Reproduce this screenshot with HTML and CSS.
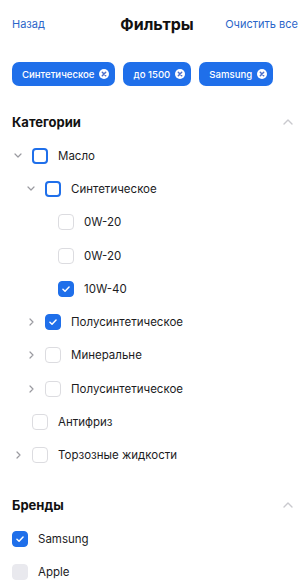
FILE: index.html
```html
<!DOCTYPE html>
<html lang="ru">
<head>
  <meta charset="UTF-8" />
  <meta name="viewport" content="width=device-width, initial-scale=1.0"/>
  <title>Фильтры</title>
<link rel="stylesheet" href="styles.css">
</head>
<body>
<div class="header">
  <a class="link" href="#">Назад</a>
  <div class="title">Фильтры</div>
  <a class="link right-link" href="#">Очистить все</a>
</div>

<div class="chips">
  <div class="chip">Синтетическое <span class="chip-x"><svg viewBox="0 0 10 10"><path d="M3.3 3.3l3.4 3.4M6.7 3.3l-3.4 3.4"/></svg></span></div>
  <div class="chip">до 1500 <span class="chip-x"><svg viewBox="0 0 10 10"><path d="M3.3 3.3l3.4 3.4M6.7 3.3l-3.4 3.4"/></svg></span></div>
  <div class="chip">Samsung <span class="chip-x"><svg viewBox="0 0 10 10"><path d="M3.3 3.3l3.4 3.4M6.7 3.3l-3.4 3.4"/></svg></span></div>
</div>

<div class="section">
  <div class="section-head">
    <span>Категории</span>
    <svg class="up" viewBox="0 0 10 6"><path d="M1 5l4-4 4 4"/></svg>
  </div>
  <div class="tree">
    <div class="row lvl0">
      <span class="arrow"><svg viewBox="0 0 8 5"><path d="M1 1l3 3 3-3"/></svg></span>
      <span class="box partial"></span>
      <span class="label">Масло</span>
    </div>
    <div class="row lvl1">
      <span class="arrow"><svg viewBox="0 0 8 5"><path d="M1 1l3 3 3-3"/></svg></span>
      <span class="box partial"></span>
      <span class="label">Синтетическое</span>
    </div>
    <div class="row lvl2">
      <span class="arrow"></span>
      <span class="box"></span>
      <span class="label">0W-20</span>
    </div>
    <div class="row lvl2">
      <span class="arrow"></span>
      <span class="box"></span>
      <span class="label">0W-20</span>
    </div>
    <div class="row lvl2">
      <span class="arrow"></span>
      <span class="box checked"><svg viewBox="0 0 16 16"><path d="M4.5 8.2l2.4 2.3 4.6-4.8"/></svg></span>
      <span class="label">10W-40</span>
    </div>
    <div class="row lvl1">
      <span class="arrow"><svg class="right" viewBox="0 0 5 8"><path d="M1 1l3 3-3 3"/></svg></span>
      <span class="box checked"><svg viewBox="0 0 16 16"><path d="M4.5 8.2l2.4 2.3 4.6-4.8"/></svg></span>
      <span class="label">Полусинтетическое</span>
    </div>
    <div class="row lvl1">
      <span class="arrow"><svg class="right" viewBox="0 0 5 8"><path d="M1 1l3 3-3 3"/></svg></span>
      <span class="box"></span>
      <span class="label">Минеральне</span>
    </div>
    <div class="row lvl1">
      <span class="arrow"><svg class="right" viewBox="0 0 5 8"><path d="M1 1l3 3-3 3"/></svg></span>
      <span class="box"></span>
      <span class="label">Полусинтетическое</span>
    </div>
    <div class="row lvl0">
      <span class="arrow"></span>
      <span class="box"></span>
      <span class="label">Антифриз</span>
    </div>
    <div class="row lvl0">
      <span class="arrow"><svg class="right" viewBox="0 0 5 8"><path d="M1 1l3 3-3 3"/></svg></span>
      <span class="box"></span>
      <span class="label">Торзозные жидкости</span>
    </div>
  </div>
</div>

<div class="section brands">
  <div class="section-head">
    <span>Бренды</span>
    <svg class="up" viewBox="0 0 10 6"><path d="M1 5l4-4 4 4"/></svg>
  </div>
  <div class="row">
    <span class="box checked"><svg viewBox="0 0 16 16"><path d="M4.5 8.2l2.4 2.3 4.6-4.8"/></svg></span>
    <span class="label">Samsung</span>
  </div>
  <div class="row">
    <span class="box disabled"></span>
    <span class="label">Apple</span>
  </div>
</div>
</body>
</html>
```

FILE: styles.css
```css
body {
  margin: 0;
  background: #fff;
  font-family: Inter, "Noto Sans", sans-serif;
  color: #1c1c1e;
  overflow: hidden;
}

.header {
  height: 48px;
  display: grid;
  grid-template-columns: 1fr auto 1fr;
  align-items: center;
  padding: 0 8px 0 12px;
}

.link {
  color: #2b66c9;
  font-size: 11px;
  text-decoration: none;
}

.right-link {
  justify-self: end;
}

.title {
  font-size: 16px;
  font-weight: 700;
  color: #111;
  padding-left: 4px;
}

.chips {
  display: flex;
  gap: 8px;
  padding: 14px 12px 0;
}

.chip {
  height: 24px;
  display: flex;
  align-items: center;
  gap: 5px;
  padding: 0 6px 0 10px;
  background: #1f6fea;
  color: #fff;
  border-radius: 7px;
  font-size: 9.6px;
  font-weight: 500;
}

.chip-x {
  width: 10px;
  height: 10px;
  border-radius: 50%;
  background: #fff;
  display: flex;
}

.chip-x svg {
  width: 10px;
  height: 10px;
  fill: none;
  stroke: #4d6fc9;
  stroke-width: 1.5;
  stroke-linecap: round;
}

.section {
  padding-top: 19px;
}

.brands {
  padding-top: 16px;
}

.section-head {
  height: 34px;
  display: flex;
  align-items: center;
  justify-content: space-between;
  padding: 0 13px 0 12px;
  font-size: 13px;
  font-weight: 700;
  color: #111;
}

.up {
  width: 10px;
  height: 6px;
  fill: none;
  stroke: #c9c9ce;
  stroke-width: 1.4;
  stroke-linecap: round;
  stroke-linejoin: round;
}

.row {
  height: 33.3px;
  display: flex;
  align-items: center;
  padding-left: 12px;
  font-size: 11.5px;
}

.lvl1 { padding-left: 25px; }
.lvl2 { padding-left: 38px; }

.arrow {
  width: 12px;
  margin-right: 8px;
  display: flex;
  justify-content: center;
  align-items: center;
}

.arrow svg {
  width: 8px;
  height: 5px;
  fill: none;
  stroke: #9a9aa0;
  stroke-width: 1.2;
  stroke-linecap: round;
  stroke-linejoin: round;
}

.arrow svg.right {
  width: 5px;
  height: 8px;
}

.box {
  width: 16px;
  height: 16px;
  box-sizing: border-box;
  border: 1px solid #dcdce0;
  border-radius: 4px;
  background: #fff;
  flex-shrink: 0;
  margin-right: 10px;
}

.box.partial {
  border: 2.5px solid #1f6fea;
  border-radius: 4px;
}

.box.checked {
  background: #1f6fea;
  border-color: #1f6fea;
  display: flex;
}

.box.checked svg {
  width: 14px;
  height: 14px;
  fill: none;
  stroke: #fff;
  stroke-width: 1.7;
  stroke-linecap: round;
  stroke-linejoin: round;
}

.box.disabled {
  background: #e9e9ee;
  border-color: #e9e9ee;
}

.label {
  color: #1c1c1e;
}
```
